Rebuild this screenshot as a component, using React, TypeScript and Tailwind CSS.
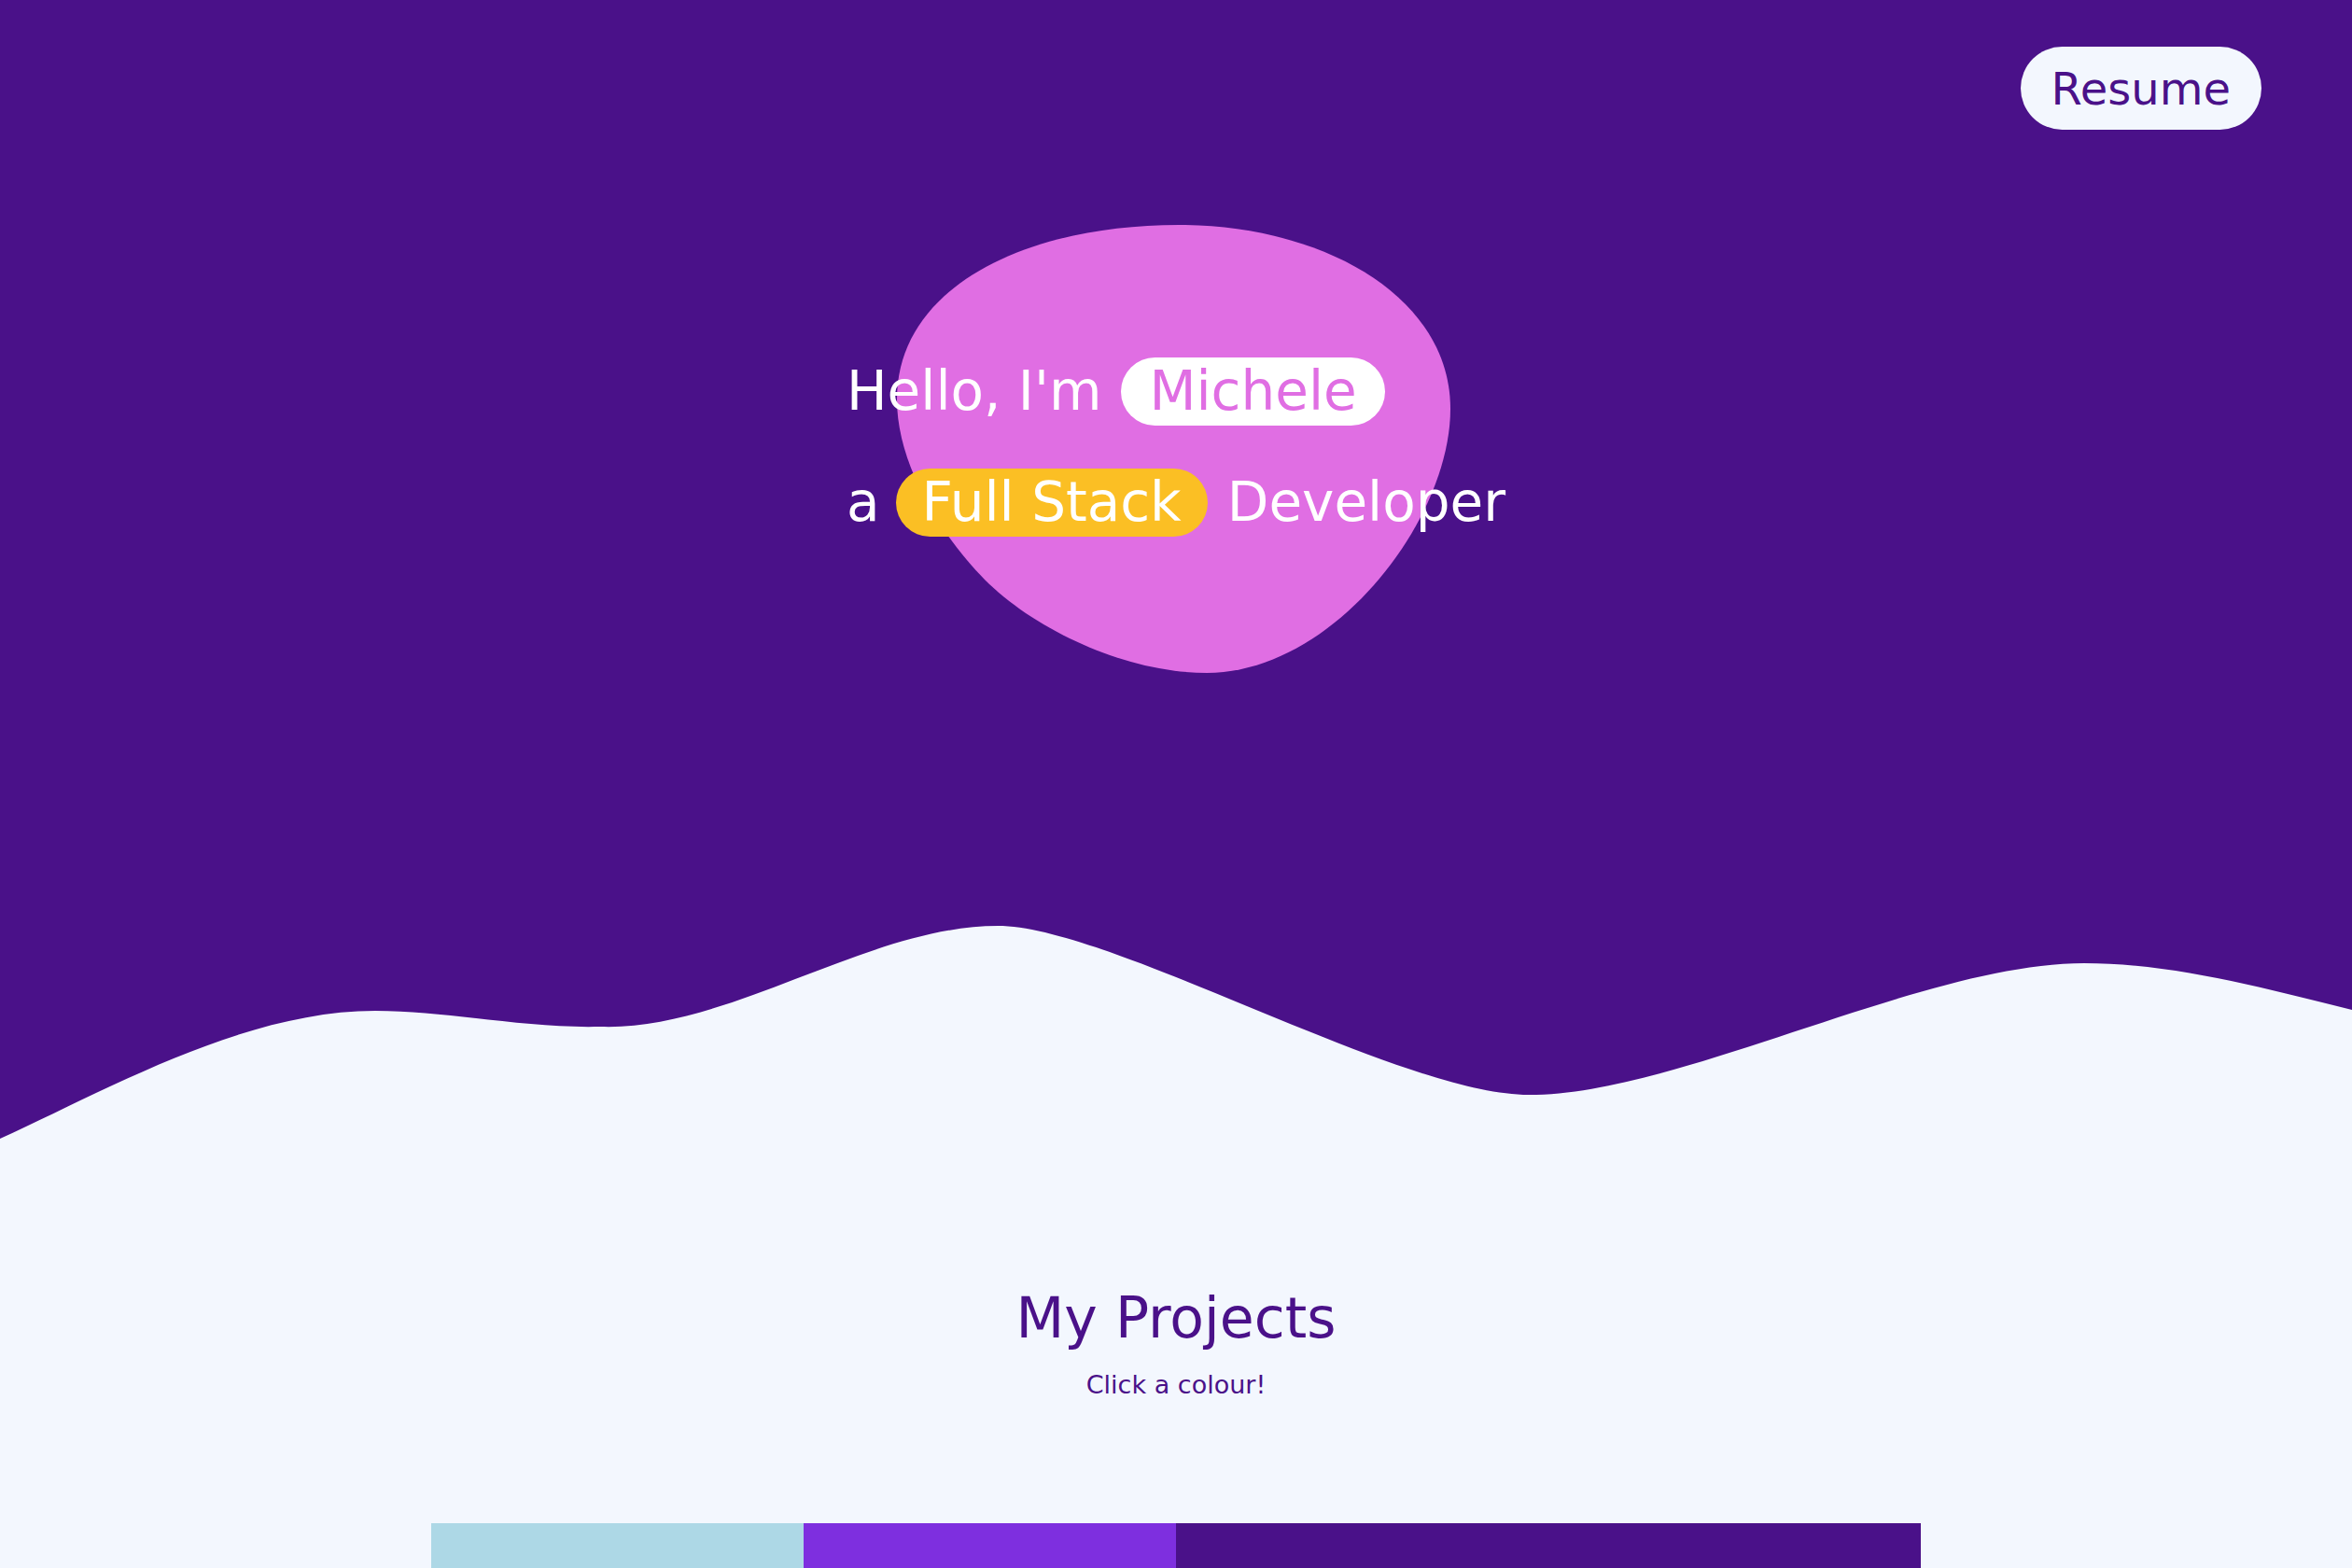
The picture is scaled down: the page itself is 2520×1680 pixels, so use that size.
import React from 'react';

// hand-traced blob, local coords of a 600x484 box
const BLOB_PATH =
  'M305,3 C460,3 596,80 596,200 C596,320 470,483 335,483 C250,483 152,438 97,383 ' +
  'C57,343 3,265 3,190 C3,70 140,3 305,3 Z';

const WAVE_PATH =
  'M0,240 C110,190 260,103 402,103 C480,103 560,122 643,120 C780,125 930,12 1069,12 ' +
  'C1190,12 1500,193 1638,193 C1800,193 2060,52 2233,52 C2330,52 2430,80 2520,102 L2520,0 L0,0 Z';

const projects = [
  { name: 'sky', color: 'bg-[#add8e6]' },
  { name: 'violet', color: 'bg-[#7e2fdf]' },
  { name: 'grape', color: 'bg-[#4a1189]' },
  { name: 'plum', color: 'bg-[#4a1189]' },
];

const App = () => {
  return (
    <div className="min-h-screen bg-[#f3f7fe] font-['DejaVu_Sans',sans-serif] overflow-hidden">
      {/* Hero */}
      <section className="relative h-[980px] bg-[#4a1189]">
        <svg
          className="absolute top-[238px] left-1/2 -ml-[302px] w-[600px] h-[484px]"
          viewBox="0 0 600 484"
        >
          <path d={BLOB_PATH} fill="#e06ee3" />
        </svg>

        <header className="relative flex justify-end pt-[50px] pr-[97px]">
          <button className="h-[89px] px-[33px] flex items-center rounded-full bg-[#f3f7fe] text-[#4a1189] text-[48px]">
            Resume
          </button>
        </header>

        <div className="relative mt-[221px] flex justify-center">
          <div className="flex flex-col text-white text-[58px]">
            <div className="h-[119px] flex items-center gap-[21px]">
              <span className="leading-[73px]">Hello, I'm</span>
              <span className="leading-[73px] px-[30px] rounded-full bg-white text-[#e06ee3]">Michele</span>
            </div>
            <div className="h-[119px] flex items-center gap-[21px]">
              <span className="leading-[73px]">a</span>
              <span className="leading-[73px] -ml-[4px] px-[28px] rounded-full bg-[#fbbf24] text-white">Full Stack</span>
              <span className="leading-[73px]">Developer</span>
            </div>
          </div>
        </div>
      </section>

      {/* Wave */}
      <svg className="block w-full h-[250px]" viewBox="0 0 2520 250" preserveAspectRatio="none">
        <path d={WAVE_PATH} fill="#4a1189" />
      </svg>

      {/* Projects */}
      <section className="flex flex-col items-center pt-[146px]">
        <h2 className="text-[60px] leading-[72px] text-[#4a1189]">My Projects</h2>
        <p className="mt-[16px] text-[27px] leading-[40px] text-[#4a1189]">Click a colour!</p>
        <div className="mt-[128px] w-[1596px] grid grid-cols-4">
          {projects.map((p) => (
            <button key={p.name} className={`h-[400px] ${p.color}`} aria-label={p.name} />
          ))}
        </div>
      </section>
    </div>
  );
};

export default App;
